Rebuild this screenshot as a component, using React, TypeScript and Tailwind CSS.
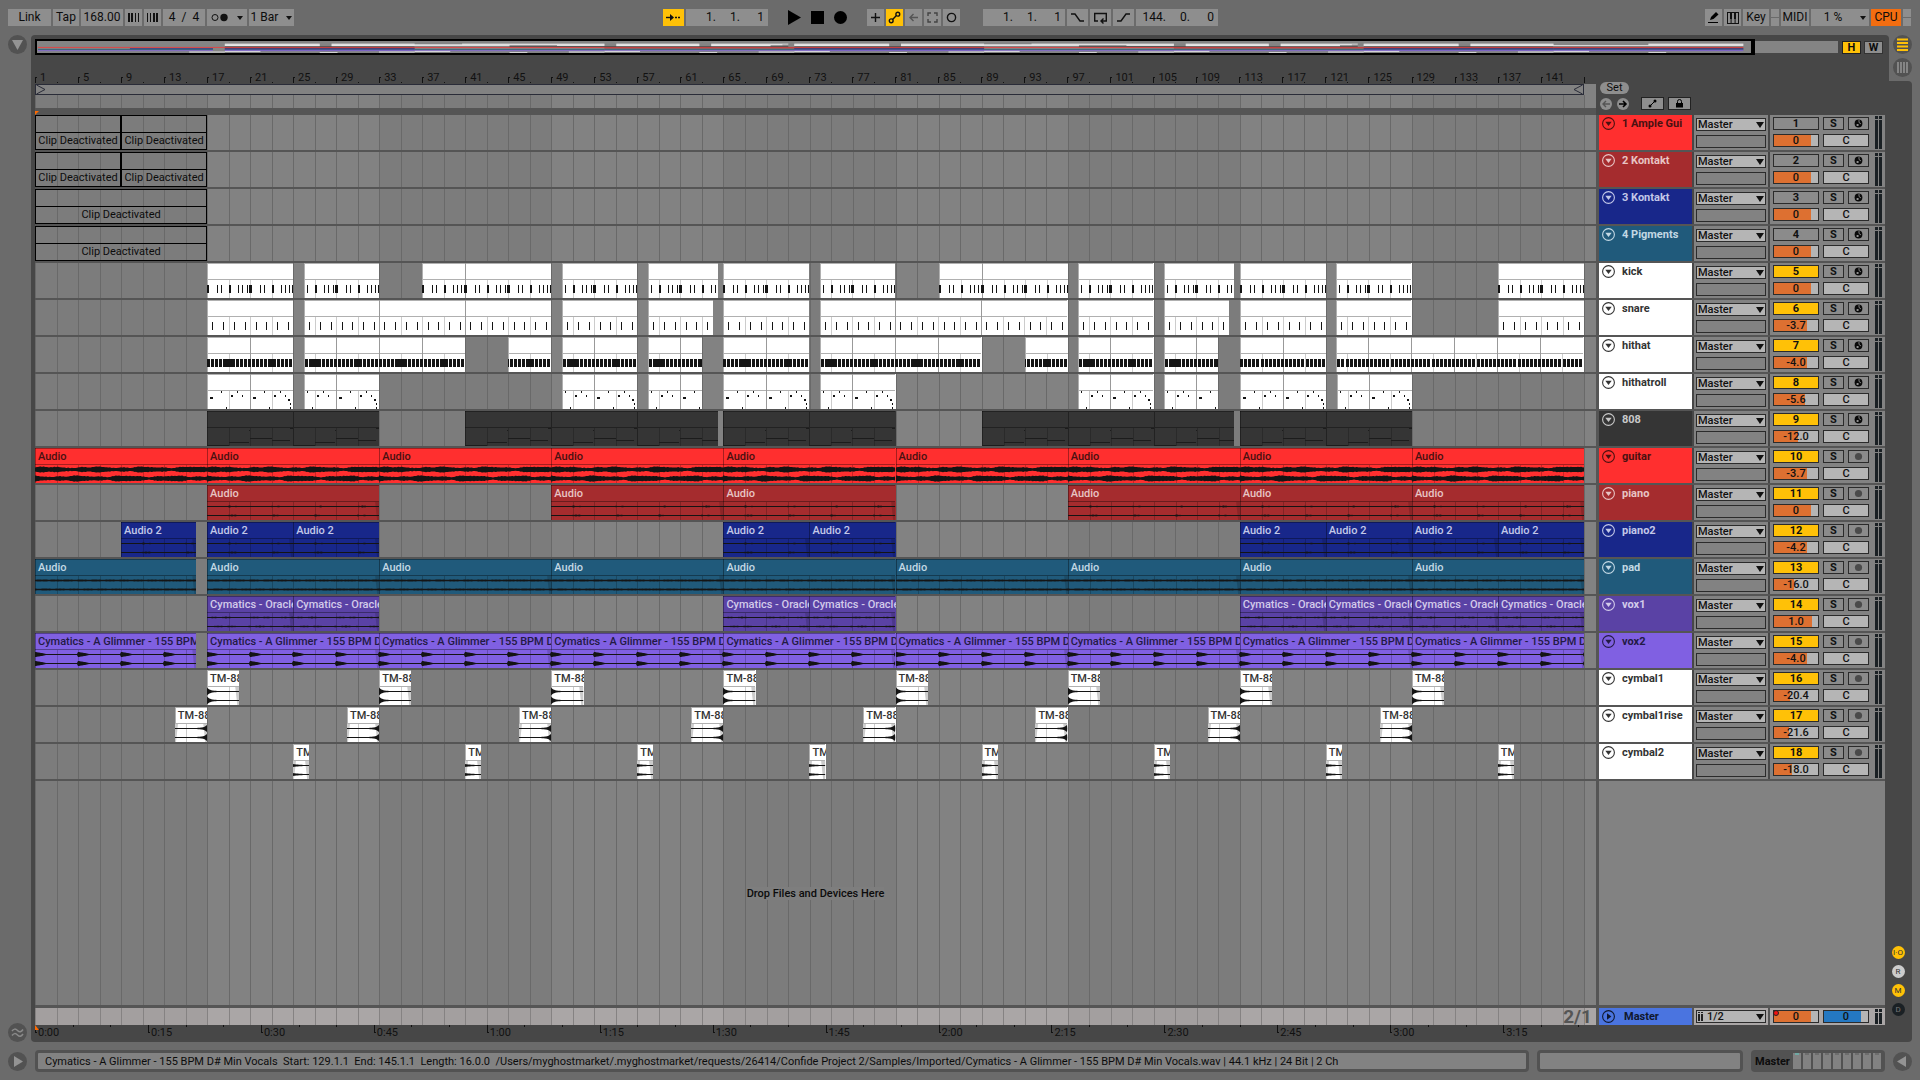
import { useState } from "react";
import type { ReactNode } from "react";

type Kind = "off" | "kick" | "snare" | "hat" | "roll" | "bass" | "guitar" | "piano" | "pad" | "vox" | "pulse" | "hit" | "rise" | "blip";

type Track = {
  name: string;
  color: string;
  text: string;
  kind: Kind;
  title?: string;
  clips: number[][];
  dividers?: number[];
  volume: string;
  fill: number;
};

// bars shown across the timeline
const TOTAL = 145.11;
const BAR = 10.757;

const every16 = [[1, 17], [17, 33], [33, 49], [49, 65], [65, 81], [81, 97], [97, 113], [113, 129], [129, 145]];
const longRun = [[1, 16], ...every16.slice(1)];
const rollClips = [[17, 25], [26, 33], [50, 57], [58, 63], [65, 73], [74, 81], [98, 105], [106, 111], [113, 121], [122, 129]];

const tracks: Track[] = [
  { name: "1 Ample Gui", color: "#ff2f2f", text: "#4a1111", kind: "off", clips: [[1, 9], [9, 17]], volume: "0", fill: 83 },
  { name: "2 Kontakt", color: "#a52c2e", text: "#e8c4c4", kind: "off", clips: [[1, 9], [9, 17]], volume: "0", fill: 83 },
  { name: "3 Kontakt", color: "#18278a", text: "#c3c8e8", kind: "off", clips: [[1, 17]], volume: "0", fill: 83 },
  { name: "4 Pigments", color: "#205a7b", text: "#c3d8e4", kind: "off", clips: [[1, 17]], volume: "0", fill: 83 },
  {
    name: "kick", color: "#ffffff", text: "#333333", kind: "kick", dividers: [41, 89], volume: "0", fill: 83,
    clips: [[17, 25], [26, 33], [37, 49], [50, 57], [58, 64.5], [65, 73], [74, 81], [85, 97], [98, 105], [106, 112.5], [113, 121], [122, 129], [137, 145]],
  },
  {
    name: "snare", color: "#ffffff", text: "#333333", kind: "snare", dividers: [33, 41, 81, 89], volume: "-3.7", fill: 75,
    clips: [[17, 25], [26, 49], [50, 57], [58, 64], [65, 73], [74, 97], [98, 105], [106, 112], [113, 121], [122, 129], [137, 145]],
  },
  {
    name: "hithat", color: "#ffffff", text: "#333333", kind: "hat", volume: "-4.0", fill: 74,
    dividers: [21, 29, 33, 37, 53, 61, 69, 77, 81, 85, 101, 109, 117, 125, 129, 133, 137, 141],
    clips: [[17, 25], [26, 41], [45, 49], [50, 57], [58, 63], [65, 73], [74, 89], [93, 97], [98, 105], [106, 111], [113, 121], [122, 145]],
  },
  {
    name: "hithatroll", color: "#ffffff", text: "#333333", kind: "roll", volume: "-5.6", fill: 70,
    dividers: [21, 29, 53, 61, 69, 77, 101, 109, 117, 125], clips: rollClips,
  },
  {
    name: "808", color: "#353535", text: "#c9c9c9", kind: "bass", dividers: [25, 49, 57, 73, 97, 105, 121], volume: "-12.0", fill: 54,
    clips: [[17, 33], [41, 64.5], [65, 81], [89, 112.5], [113, 129]],
  },
  { name: "guitar", color: "#ff2f2f", text: "#4a1111", kind: "guitar", title: "Audio", clips: every16, volume: "-3.7", fill: 75 },
  { name: "piano", color: "#a52c2e", text: "#e8c4c4", kind: "piano", title: "Audio", clips: [[17, 33], [49, 65], [65, 81], [97, 113], [113, 129], [129, 145]], volume: "0", fill: 83 },
  { name: "piano2", color: "#18278a", text: "#c3c8e8", kind: "piano", title: "Audio 2", clips: [[9, 16], [17, 25], [25, 33], [65, 73], [73, 81], [113, 121], [121, 129], [129, 137], [137, 145]], volume: "-4.2", fill: 75 },
  { name: "pad", color: "#205a7b", text: "#c3d8e4", kind: "pad", title: "Audio", clips: longRun, volume: "-16.0", fill: 45 },
  { name: "vox1", color: "#5a42a5", text: "#d3cbea", kind: "vox", title: "Cymatics - Oracle", clips: [[17, 25], [25, 33], [65, 73], [73, 81], [113, 121], [121, 129], [129, 137], [137, 145]], volume: "1.0", fill: 86 },
  { name: "vox2", color: "#8060e2", text: "#231a44", kind: "pulse", title: "Cymatics - A Glimmer - 155 BPM D#", clips: longRun, volume: "-4.0", fill: 74 },
  { name: "cymbal1", color: "#ffffff", text: "#333333", kind: "hit", title: "TM-88", clips: [17, 33, 49, 65, 81, 97, 113, 129].map((b) => [b, b + 3]), volume: "-20.4", fill: 36 },
  { name: "cymbal1rise", color: "#ffffff", text: "#333333", kind: "rise", title: "TM-88", clips: [17, 33, 49, 65, 81, 97, 113, 129].map((b) => [b - 3, b]), volume: "-21.6", fill: 34 },
  { name: "cymbal2", color: "#ffffff", text: "#333333", kind: "blip", title: "TM", clips: [25, 41, 57, 73, 89, 105, 121, 137].map((b) => [b, b + 1.5]), volume: "-18.0", fill: 41 },
];

// note tables: [x, y, width, height] in pixels over an eight bar loop
const LOOP: Record<string, number[][]> = {
  kick: [[0, 2], [10, 1], [14, 1], [22, 2], [31, 1], [35, 1], [40, 1], [42, 3], [53, 1], [57, 1], [65, 2], [74, 1], [78, 1], [82, 1], [85, 1]].map(([x, w]) => [x, 22, w, 8]),
  snare: [5, 16, 27, 38, 49, 59, 70, 81].map((x) => [x, 22, 1, 8]),
  hat: Array.from({ length: 21 }, (_, i) => [Math.round(i * 4.1), 22, 3, 8]),
  roll: [
    [3, 23, 3, 2], [14, 17, 1, 2], [19, 33, 1, 2], [24, 21, 2, 2], [30, 17, 1, 2], [35, 21, 1, 2],
    [46, 23, 3, 2], [57, 17, 1, 2], [62, 33, 1, 2], [67, 21, 2, 2], [73, 17, 1, 2], [78, 21, 1, 2], [81, 25, 2, 2], [83, 29, 1, 2], [83, 33, 1, 2],
  ],
  bass: [[0, 34, 22, 1], [22, 31, 20, 1], [42, 19, 1, 1], [43, 27, 22, 1], [65, 29, 18, 1], [83, 17, 3, 1]],
};

const HAT_ROLLS = [[18, 22, 7, 8], [61, 22, 7, 8]];

function notePath(kind: Kind, start: number, end: number) {
  let d = "";
  const width = (end - start) * BAR;
  const notes = kind === "hat" && start < 113 ? [...LOOP.hat, ...HAT_ROLLS] : LOOP[kind];
  for (let base = 1; base < end; base += 8) {
    if (base + 8 <= start) continue;
    const off = Math.round((base - start) * BAR);
    for (const [x, y, w, h] of notes) {
      const left = Math.max(0, off + x);
      const right = Math.min(width, off + x + w);
      if (right > left) d += `M${left} ${y}H${right}V${y + h}H${left}Z`;
    }
  }
  return d;
}

function amplitude(kind: Kind, x: number, width: number, ch: number) {
  const wobble = Math.abs(Math.sin(x * 0.9 + ch) * Math.sin(x * 0.23 + ch * 2));
  switch (kind) {
    case "guitar":
      return 1.9 + wobble * 0.7 + Math.sin(x * 0.13 + ch * 2.4) * 0.5 + Math.sin(x * 0.31 + ch) * 0.3;
    case "piano":
      return 0.5 + (x % 43 > 21 && x % 43 < 30 ? wobble * 0.5 : 0);
    case "pad":
      return 0.8 + wobble * 0.2;
    case "vox":
      return 0.5 + Math.abs(Math.sin(x * 0.09)) * 0.4 * wobble;
    case "pulse": {
      const p = x % 43;
      return 0.5 + (p < 2 ? 2 : Math.max(0, 2.2 - p * 0.19));
    }
    case "hit":
      return 0.5 + 3.4 * Math.exp(-x / 3);
    case "rise":
      return 0.5 + 3.4 * Math.exp(-(width - x) / 3);
    case "blip":
      return 0.5 + 1 * Math.exp(-x / 5);
    default:
      return 0.5;
  }
}

function wavePath(kind: Kind, width: number) {
  let d = "";
  [21.5, 30.5].forEach((mid, ch) => {
    const top: string[] = [];
    const bottom: string[] = [];
    for (let x = 0; x <= width; x += 1) {
      const a = amplitude(kind, x, width, ch);
      top.push(`${x} ${(mid - a).toFixed(1)}`);
      bottom.unshift(`${x} ${(mid + a).toFixed(1)}`);
    }
    d += `M${top.join("L")}L${width} ${mid - 0.5}V${mid + 0.5}L${bottom.join("L")}Z`;
  });
  return d;
}

function Clip({ track, start, end }: { track: Track; start: number; end: number }) {
  const width = (end - start) * BAR;
  const style = { width: `${((end - start) / TOTAL) * 100}%` };

  if (track.kind === "off") {
    return (
      <div className="flex shrink-0 flex-col border border-black" style={style}>
        <div className="h-4" />
        <div className="flex h-[18px] items-center justify-center overflow-hidden border-t border-black whitespace-nowrap">
          Clip Deactivated
        </div>
      </div>
    );
  }

  const white = track.color === "#ffffff";
  const midi = !track.title;
  const edge = white ? "#b0b0b0" : "rgba(0,0,0,0.35)";
  const fade = white ? "#cccccc" : "rgba(0,0,0,0.15)";
  const gridLines: number[] = [];
  for (let b = 3; b < end; b += 2) if (b > start) gridLines.push(b);

  return (
    <div className="grid shrink-0 grid-cols-[minmax(0,1fr)] overflow-hidden" style={{ ...style, backgroundColor: track.color }}>
      <svg className="col-start-1 row-start-1 block h-[35px] w-full" viewBox={`0 0 ${width} 35`} preserveAspectRatio="none">
        <g shapeRendering="crispEdges">
          {gridLines.map((b) => (
            <rect key={b} x={(b - start) * BAR} y={17} width={1} height={18} fill={white ? "#cccccc" : "rgba(0,0,0,0.2)"} />
          ))}
          <rect x={0} y={0} width={width} height={1} fill={edge} />
          <rect x={0} y={16} width={width} height={1} fill={edge} />
          <rect x={0} y={0} width={1} height={35} fill={edge} />
          {track.dividers?.filter((b) => b > start && b < end).map((b) => (
            <rect key={b} x={(b - start) * BAR} y={0} width={1} height={35} fill={white ? "#999999" : "#222222"} />
          ))}
        </g>
        {!midi && track.kind !== "guitar" && (
          <path d={`M${width} 17V35H${width - 2}L${width - 4} 17Z${track.kind === "rise" || track.kind === "blip" ? "M0 17V35H1L3 17Z" : ""}`} fill={fade} />
        )}
        {midi ? (
          <path d={notePath(track.kind, start, end)} fill={track.kind === "bass" ? "#1c1c1c" : "#141414"} shapeRendering="crispEdges" />
        ) : (
          <path d={wavePath(track.kind, width)} fill="#141414" />
        )}
      </svg>
      {track.title && (
        <span className="col-start-1 row-start-1 h-4 overflow-hidden pl-[3px] leading-[17px] font-medium whitespace-nowrap" style={{ color: track.text }}>
          {track.title}
        </span>
      )}
    </div>
  );
}

function Lane({ track }: { track: Track }) {
  const cells: ReactNode[] = [];
  let cursor = 1;
  track.clips.forEach(([start, end]) => {
    if (start > cursor) {
      cells.push(<div key={`gap${start}`} className="shrink-0" style={{ width: `${((start - cursor) / TOTAL) * 100}%` }} />);
    }
    cells.push(<Clip key={start} track={track} start={start} end={end} />);
    cursor = end;
  });
  return <div className="flex h-[37px] overflow-hidden border-b-2 border-[#555555]">{cells}</div>;
}

// alternating 16 bar shading with a line on every second bar
function BarGrid({ light = false }: { light?: boolean }) {
  return (
    <svg className="absolute inset-0 h-full w-full" viewBox={`0 0 ${TOTAL * BAR} 1`} preserveAspectRatio="none" shapeRendering="crispEdges">
      <rect width={TOTAL * BAR} height={1} fill={light ? "#aaa6a6" : "#828282"} />
      {Array.from({ length: 5 }, (_, i) => (
        <rect key={i} x={i * 32 * BAR} width={16 * BAR} height={1} fill={light ? "#a39f9f" : "#7c7c7c"} />
      ))}
      {Array.from({ length: 73 }, (_, i) => (
        <rect key={i} x={i * 2 * BAR} width={1} height={1} fill={light ? "#858282" : "#696969"} />
      ))}
    </svg>
  );
}

function Overview() {
  return (
    <div className="flex h-4 items-center">
      <div className="flex h-4 flex-1 items-center bg-[linear-gradient(#848484,#848484)] bg-[length:100%_12px] bg-center bg-no-repeat">
        <div className="h-4 w-[95.4%] border-2 border-black pl-px">
          <svg className="block h-3 w-full border-r-2 border-black" viewBox="0 0 1713 12" preserveAspectRatio="none">
            {tracks.map((t, i) =>
              t.kind === "off" ? null : t.clips.map(([s, e]) => (
                <rect key={`${i}-${s}`} x={(s - 1) * 11.863 - 3} y={i * 0.66} width={(e - s) * 11.863} height={0.9} fill={t.color} opacity={0.8} />
              ))
            )}
          </svg>
        </div>
      </div>
      <button className="ml-1 h-[13px] w-[19px] border border-[#222222] bg-[#ffc107] leading-[11px] font-bold">H</button>
      <button className="mr-0.5 ml-[3px] h-[13px] w-[19px] border border-[#333333] bg-[#8e8e8e] leading-[11px] font-bold">W</button>
    </div>
  );
}

function Ruler() {
  return (
    <div className="flex h-[29px] items-end overflow-hidden">
      {Array.from({ length: 36 }, (_, i) => (
        <div key={i} className="flex h-[13px] shrink-0" style={{ width: `${(4 / TOTAL) * 100}%` }}>
          <div className="flex w-1/2 items-end">
            <svg className="h-[7px] w-[5px] shrink-0" viewBox="0 0 5 7" shapeRendering="crispEdges">
              <path d="M0 0h2v1H1v5H0z" fill="#111" />
            </svg>
            <span className="leading-[13px] whitespace-nowrap text-[#111]">{i * 4 + 1}</span>
          </div>
          <div className="mt-auto mb-px h-px w-px bg-[#111]" />
        </div>
      ))}
      <div className="mb-px h-[6px] w-px bg-[#111]" />
    </div>
  );
}

function TimeRuler() {
  return (
    <div className="flex h-[17px] overflow-hidden">
      {Array.from({ length: 14 }, (_, i) => (
        <div key={i} className="flex shrink-0" style={{ width: `${(10.5 / TOTAL) * 100}%` }}>
          <div className="flex w-1/3">
            {i === 0 ? (
              <svg className="h-2 w-[3px] shrink-0 overflow-visible" viewBox="0 0 3 8"><path d="M0 0L4 5H0Z" fill="#ff6a00" /><path d="M0 5h1v2h1v1H0z" fill="#111" /></svg>
            ) : (
              <svg className="h-2 w-[3px] shrink-0" viewBox="0 0 3 8" shapeRendering="crispEdges"><path d="M0 0h1v7h1v1H0z" fill="#111" /></svg>
            )}
            <span className="leading-[16px] whitespace-nowrap text-[#111]">
              {Math.floor((i * 15) / 60)}:{String((i * 15) % 60).padStart(2, "0")}
            </span>
          </div>
          <div className="h-0.5 w-1/3 border-l border-[#111]" />
          <div className="h-0.5 w-1/3 border-l border-[#111]" />
        </div>
      ))}
    </div>
  );
}

function FoldIcon({ color, play = false }: { color: string; play?: boolean }) {
  return (
    <svg className="size-[13px] shrink-0" viewBox="0 0 13 13">
      <circle cx="6.5" cy="6.5" r="5.9" fill="none" stroke={color} strokeWidth="1.1" />
      <path d={play ? "M5 3.3L9.4 6.5L5 9.7Z" : "M3.3 4.7H9.7L6.5 9Z"} fill={color} />
    </svg>
  );
}

function RouteSelect({ label, options, icon }: { label: string; options: string[]; icon?: boolean }) {
  return (
    <div className="relative">
      <select
        aria-label={label}
        className={`block h-[13px] w-full appearance-none border border-[#2b2b2b] bg-[#b5b5b5] py-0 pr-3 leading-[11px] font-medium text-[#111] ${icon ? "pl-2.5" : "pl-px"}`}
      >
        {options.map((o) => (
          <option key={o}>{o}</option>
        ))}
      </select>
      <svg className="pointer-events-none absolute top-1 right-[2px] h-[6px] w-2" viewBox="0 0 8 6"><path d="M0 0H8L4 6Z" fill="#111" /></svg>
      {icon && (
        <svg className="pointer-events-none absolute top-0.5 left-0.5 h-[9px] w-[5px]" viewBox="0 0 5 9" shapeRendering="crispEdges">
          <path d="M0 0h2v1H0zM3 0h2v1H3zM0 2h2v7H0zM3 2h2v7H3z" fill="#222" />
        </svg>
      )}
    </div>
  );
}

function ValueBox({ label, value, fill, blue }: { label: string; value: string; fill: number; blue?: boolean }) {
  const tint = blue ? "#2478c2" : "#dd7031";
  return (
    <input
      aria-label={label}
      defaultValue={value}
      className="block h-[13px] w-[46px] border border-[#2b2b2b] bg-[#b5b5b5] p-0 text-center leading-[11px] font-medium text-[#111]"
      style={{ backgroundImage: `linear-gradient(to right, ${tint} ${fill}%, #b5b5b5 ${fill}%)` }}
    />
  );
}

function Meter() {
  return (
    <div className="flex gap-px self-stretch">
      {[0, 1].map((i) => (
        <div key={i} className="flex w-[3px] flex-col gap-px">
          <div className="h-[3px] bg-[#1a2024]" />
          <div className="flex-1 bg-[#1a2024]" />
        </div>
      ))}
    </div>
  );
}

function TrackHeader({ track, index }: { track: Track; index: number }) {
  const [active, setActive] = useState(index > 3);
  return (
    <div className="flex h-[37px] gap-0.5 border-b-2 border-[#555555]">
      <div className="flex w-[93px] gap-[7px] pt-0.5 pl-[3px]" style={{ backgroundColor: track.color, color: track.text }}>
        <FoldIcon color={track.text} />
        <span className="leading-[13px] font-bold whitespace-nowrap">{track.name}</span>
      </div>
      <div className="w-[74px] space-y-1 bg-[#828282] px-0.5 pt-[3px]">
        <RouteSelect label={`${track.name} output`} options={["Master", "Sends Only"]} />
        <div className="h-[13px] border border-[#2b2b2b]" />
      </div>
      <div className="flex w-[115px] gap-1.5 bg-[#828282] py-px pl-[3px]">
        <div className="mt-px grid grid-cols-[46px_21px_21px] grid-rows-[13px_13px] gap-x-1 gap-y-1">
          <button
            onClick={() => setActive(!active)}
            className={`border border-[#2b2b2b] leading-[11px] font-bold text-[#111] ${active ? "bg-[#ffc107]" : "bg-[#8b8b8b]"}`}
          >
            {index + 1}
          </button>
          <button className="border border-[#2b2b2b] bg-[#8b8b8b] leading-[11px] font-bold text-[#111]">S</button>
          <button aria-label={`Arm ${track.name}`} className="flex items-center justify-center border border-[#2b2b2b] bg-[#8b8b8b]">
            <svg className="size-[9px]" viewBox="0 0 9 9">
              {index < 9 ? (
                <>
                  <circle cx="4.5" cy="4.5" r="3.9" fill="#0a0a0a" />
                  <path d="M5 1V3.500L7 5" fill="none" stroke="#9a9a9a" strokeWidth="0.8" />
                  <ellipse cx="3.6" cy="6" rx="1.2" ry="1" fill="#9a9a9a" />
                </>
              ) : (
                <circle cx="4.5" cy="4.5" r="3.6" fill="#4a4a4a" />
              )}
            </svg>
          </button>
          <ValueBox label={`${track.name} volume`} value={track.volume} fill={track.fill} />
          <button className="col-span-2 border border-[#2b2b2b] bg-[#b5b5b5] leading-[11px] font-medium text-[#111]">C</button>
        </div>
        <Meter />
      </div>
    </div>
  );
}

function Tool({ children, className, label }: { children?: ReactNode; className: string; label?: string }) {
  return (
    <button aria-label={label} className={`flex h-[17px] shrink-0 items-center justify-center whitespace-pre ${className}`}>
      {children}
    </button>
  );
}

function Stroke({ d, w = 13, color = "#111", children }: { d?: string; w?: number; color?: string; children?: ReactNode }) {
  return (
    <svg className="block" width={w} height={13} viewBox={`0 0 ${w} 13`} fill="none" stroke={color} strokeWidth={1.4}>
      {d && <path d={d} />}
      {children}
    </svg>
  );
}

function Position({ parts }: { parts: string[] }) {
  return (
    <div className="flex h-[17px] w-[82px] shrink-0 items-center justify-end bg-[#8e8e8e] pr-1">
      {parts.map((p, i) => (
        <span key={i} className={i === 0 ? "" : "w-6 text-right"}>{p}</span>
      ))}
    </div>
  );
}

const G = "bg-[#8e8e8e]";

function Transport() {
  return (
    <header className="flex h-[35px] shrink-0 items-start px-2 pt-[9px] text-[12px]">
      <div className="flex gap-0.5">
        <Tool className={`${G} w-[43px]`}>Link</Tool>
        <Tool className={`${G} w-[26px]`}>Tap</Tool>
        <input aria-label="Tempo" defaultValue="168.00" className="h-[17px] w-[42px] bg-[#8e8e8e] text-center leading-[17px]" />
        <Tool label="Nudge down" className={`${G} w-[17px]`}>
          <svg width="12" height="9" shapeRendering="crispEdges"><path d="M0 0h2v9H0zM3 0h2v9H3zM7 0h1v9H7zM10 0h1v9h-1z" fill="#111" /></svg>
        </Tool>
        <Tool label="Nudge up" className={`${G} w-[17px]`}>
          <svg width="12" height="9" shapeRendering="crispEdges"><path d="M0 0h1v9H0zM3 0h1v9H3zM6 0h2v9H6zM9 0h2v9H9z" fill="#111" /></svg>
        </Tool>
        <Tool className={`${G} w-[42px]`}>4  /  4</Tool>
        <Tool label="Metronome" className={`${G} w-10 gap-2`}>
          <svg width="18" height="9"><circle cx="4" cy="4.5" r="3" fill="none" stroke="#111" /><circle cx="13" cy="4.5" r="3.7" fill="#111" /></svg>
          <svg width="6" height="4"><path d="M0 0H6L3 4Z" fill="#111" /></svg>
        </Tool>
        <Tool className={`${G} w-[45px] gap-2`}>
          1 Bar
          <svg width="6" height="4"><path d="M0 0H6L3 4Z" fill="#111" /></svg>
        </Tool>
      </div>
      <div className="flex-[369]" />
      <div className="flex gap-0.5">
        <Tool label="Follow" className="w-[21px] bg-[#ffc107]">
          <Stroke w={15} color="#111"><path d="M0 6.5H6" /><path d="M4 3L8 6.5L4 10Z" fill="#111" stroke="none" /><path d="M9 6.5H15" strokeDasharray="2 1" /></Stroke>
        </Tool>
        <Position parts={["1.", "1.", "1"]} />
        <div className="ml-[18px] flex h-[17px] items-center gap-2.5 pr-[18px]">
          <button aria-label="Play"><svg className="block" width="13" height="15"><path d="M0 0L13 7.5L0 15Z" /></svg></button>
          <button aria-label="Stop" className="size-[13px] bg-black" />
          <button aria-label="Record" className="size-[13px] rounded-full bg-black" />
        </div>
        <Tool label="Overdub" className={`${G} w-[17px]`}><Stroke d="M6.5 2V11M2 6.5H11" /></Tool>
        <Tool label="Automation arm" className="w-[17px] bg-[#ffc107]">
          <Stroke d="M4.6 8.4L8.4 4.6"><circle cx="3.2" cy="9.8" r="1.9" /><circle cx="9.8" cy="3.2" r="1.9" /></Stroke>
        </Tool>
        <Tool label="Re-enable automation" className={`${G} w-[17px]`}><Stroke d="M11 6.5H3M6.5 3L3 6.5L6.5 10" color="#555" /></Tool>
        <Tool label="Capture" className={`${G} w-[17px]`}><Stroke d="M2 5V2H5M8 2H11V5M11 8V11H8M5 11H2V8" color="#444" /></Tool>
        <Tool label="Session record" className={`${G} w-[17px]`}><Stroke><circle cx="6.5" cy="6.5" r="4.1" /></Stroke></Tool>
        <div className="w-[19px]" />
        <Position parts={["1.", "1.", "1"]} />
        <Tool label="Punch in" className={`${G} w-[21px]`}><Stroke w={15} d="M1 3H5L10 10H14" /></Tool>
        <Tool label="Loop" className={`${G} w-[21px]`}><Stroke w={15} d="M5 10H1.7V2.5H13.3V10H8M10.5 7.5L8 10L10.5 12.5" /></Tool>
        <Tool label="Punch out" className={`${G} w-[21px]`}><Stroke w={15} d="M1 10H5L10 3H14" /></Tool>
        <Position parts={["144.", "0.", "0"]} />
      </div>
      <div className="flex-[487]" />
      <div className="flex gap-0.5">
        <Tool label="Draw mode" className={`${G} w-[17px]`}>
          <svg width="13" height="13"><path d="M3 9L4 6L9 1L11.5 3.5L6.5 8Z" /><path d="M1 11H11V12H1Z" /></svg>
        </Tool>
        <Tool label="Computer keyboard" className={`${G} w-[17px]`}>
          <svg width="12" height="12"><rect x="0.5" y="0.5" width="11" height="11" fill="none" stroke="#111" /><path d="M3 0h2v7H3zM7 0h2v7H7zM3.6 7h1v5h-1zM7.6 7h1v5h-1z" fill="#111" /></svg>
        </Tool>
        <Tool className={`${G} w-[26px]`}>Key</Tool>
        <div className="flex w-2 flex-col gap-px"><div className="h-2 bg-[#8e8e8e]" /><div className="h-2 bg-[#8e8e8e]" /></div>
        <Tool className={`${G} w-[28px]`}>MIDI</Tool>
        <Tool className={`${G} w-[58px] gap-[18px] pl-2.5`}>
          1 %
          <svg width="6" height="4"><path d="M0 0H6L3 4Z" fill="#111" /></svg>
        </Tool>
        <Tool className="w-[30px] bg-[#f36d10]">CPU</Tool>
        <div className="mr-px flex w-2 flex-col gap-px"><div className="h-2 bg-[#8e8e8e]" /><div className="h-2 bg-[#8e8e8e]" /></div>
      </div>
    </header>
  );
}

function RoundButton({ label, children }: { label: string; children: ReactNode }) {
  return (
    <button aria-label={label} className="block size-[19px] shrink-0 rounded-full bg-[#525252]">
      <svg viewBox="0 0 19 19" className="block size-[19px]">{children}</svg>
    </button>
  );
}

function TimelineColumn() {
  return (
    <div className="flex min-w-0 flex-1 flex-col">
      <Ruler />
      <div className="flex h-[11px] bg-[#828282]">
        <div className="flex items-center justify-between border border-[#2a2c38]" style={{ width: `${(144 / TOTAL) * 100}%` }}>
          <svg width="10" height="9"><path d="M0.5 0L9 4.5L0.5 9" fill="none" stroke="#2a2c38" /></svg>
          <svg width="10" height="9"><path d="M9.5 0L1 4.5L9.5 9" fill="none" stroke="#2a2c38" /></svg>
        </div>
      </div>
      <div className="relative h-[13px]"><BarGrid /></div>
      <div className="flex h-[7px] items-end bg-[#555555]">
        <svg width="4" height="4"><path d="M0 0H4L0 4Z" fill="#ff6a00" /></svg>
      </div>
      <div className="relative flex flex-1 flex-col border-b-[3px] border-[#555555]">
        <BarGrid />
        <div className="relative">
          {tracks.map((t) => <Lane key={t.name} track={t} />)}
        </div>
        <div className="relative flex flex-1 items-center justify-center">
          <span className="bg-[#7e7e7e] font-medium">Drop Files and Devices Here</span>
        </div>
      </div>
      <div className="relative h-[17px]">
        <BarGrid light />
        <span className="relative block pr-1 text-right text-[19px] leading-[17px] font-bold text-[#555555]">2/1</span>
      </div>
      <TimeRuler />
    </div>
  );
}

function HeaderColumn() {
  return (
    <div className="flex w-[289px] shrink-0 flex-col">
      <div className="flex h-[60px] flex-col pt-[27px] pl-1">
        <button className="h-3 w-[29px] rounded-full bg-[#8e8e8e] leading-3">Set</button>
        <div className="mt-[3px] flex items-center">
          <button aria-label="Previous locator" className="size-3 rounded-full bg-[#8e8e8e]">
            <svg className="block" viewBox="0 0 12 12"><path d="M10 6H3M6 3L3 6L6 9" fill="none" stroke="#555" strokeWidth="1.4" /></svg>
          </button>
          <button aria-label="Next locator" className="ml-[5px] size-3 rounded-full bg-[#8e8e8e]">
            <svg className="block" viewBox="0 0 12 12"><path d="M2 6H9M6 3L9 6L6 9" fill="none" stroke="#000" strokeWidth="1.6" /></svg>
          </button>
          <button aria-label="Automation mode" className="ml-3 flex h-[13px] w-[23px] items-center justify-center border border-[#222] bg-[#8e8e8e]">
            <svg width="9" height="9"><path d="M2 7L7 2" stroke="#000" /><circle cx="2" cy="7" r="1.5" /><circle cx="7" cy="2" r="1.5" /></svg>
          </button>
          <button aria-label="Lock envelopes" className="ml-1 flex h-[13px] w-[23px] items-center justify-center border border-[#222] bg-[#8e8e8e]">
            <svg width="9" height="9"><path d="M1 4H8V8.500H1Z" /><path d="M2.500 4V2.500A2 2 0 0 1 6.500 2.500V4" fill="none" stroke="#000" /></svg>
          </button>
        </div>
      </div>
      <div className="flex flex-1 flex-col border-l-[3px] border-[#555555]">
        {tracks.map((t, i) => <TrackHeader key={t.name} track={t} index={i} />)}
        <div className="flex-1 bg-[#828282]" />
        <div className="flex h-5 gap-0.5 border-t-[3px] border-[#555555] bg-[#555555]">
          <div className="flex w-[93px] items-center gap-[9px] bg-[#4a74e0] pl-[3px] font-bold text-[#10182e]">
            <FoldIcon color="#10182e" play />
            Master
          </div>
          <div className="w-[74px] bg-[#aaa6a6] px-0.5 pt-0.5">
            <RouteSelect label="Master output" options={["1/2", "3/4"]} icon />
          </div>
          <div className="flex w-[115px] gap-1 bg-[#aaa6a6] py-px pl-[3px]">
            <div className="relative mt-px">
              <ValueBox label="Master volume" value="0" fill={83} />
              <span className="absolute top-0 left-0 size-[6px] rounded-full border border-[#222] bg-[#f01010]" />
            </div>
            <div className="mt-px mr-0.5"><ValueBox label="Cue volume" value="0" fill={83} blue /></div>
            <Meter />
          </div>
        </div>
      </div>
      <div className="h-[17px]" />
    </div>
  );
}

export default function App() {
  return (
    <div className="flex min-h-screen flex-col bg-[#6b6b6b] font-[Roboto,sans-serif] text-[11px] leading-[13px] text-[#0c0c0c]">
      <Transport />
      <div className="flex flex-1">
        <div className="flex w-[31px] shrink-0 flex-col items-start justify-between pl-2">
          <RoundButton label="Show browser"><path d="M4 5H15L9.5 15Z" fill="#939393" /></RoundButton>
          <RoundButton label="Show groove pool">
            <path d="M4 8Q6.500 4.500 9.500 7.500T15 6.500M4 12.500Q6.500 9 9.500 12T15 11" fill="none" stroke="#8a8a8a" strokeWidth="1.500" />
          </RoundButton>
        </div>
        <main className="flex min-w-0 flex-1 flex-col rounded-l-sm rounded-tr-sm bg-[#474747] px-1 pt-1">
          <Overview />
          <div className="flex flex-1">
            <TimelineColumn />
            <HeaderColumn />
          </div>
        </main>
        <aside className="flex w-[31px] shrink-0 flex-col">
          <div className="flex h-[46px] flex-col gap-1 pl-1">
            <RoundButton label="Arrangement view"><path d="M4 4.500H15M4 8H15M4 11.500H15M4 15H15" stroke="#ffc107" strokeWidth="1.800" /></RoundButton>
            <RoundButton label="Session view"><path d="M5 4V15M8 4V15M11 4V15M14 4V15" stroke="#8a8a8a" strokeWidth="1.800" /></RoundButton>
          </div>
          <div className="mr-2 flex flex-1 flex-col items-center justify-end gap-1.5 rounded-r-sm bg-[#474747] pr-[5px] pb-[26px] text-[8px] leading-[13px] text-[#333]">
            <button className="size-[13px] rounded-full bg-[#ffc107]">I·O</button>
            <button className="size-[13px] rounded-full bg-[#cccccc]">R</button>
            <button className="size-[13px] rounded-full bg-[#ffc107]">M</button>
            <button className="size-[13px] rounded-full bg-[#1a2024] text-[#777]">D</button>
          </div>
        </aside>
      </div>
      <footer className="flex h-[38px] shrink-0 items-center px-2">
        <RoundButton label="Show detail view"><path d="M6 4V15L15 9.500Z" fill="#939393" /></RoundButton>
        <div className="ml-2 flex h-[22px] min-w-0 flex-1 items-center overflow-hidden rounded-sm border-[3px] border-[#525252] bg-[#828282] pl-[7px] whitespace-pre">
          Cymatics - A Glimmer - 155 BPM D# Min Vocals  Start: 129.1.1  End: 145.1.1  Length: 16.0.0  /Users/myghostmarket/.myghostmarket/requests/26414/Confide Project 2/Samples/Imported/Cymatics - A Glimmer - 155 BPM D# Min Vocals.wav | 44.1 kHz | 24 Bit | 2 Ch
        </div>
        <div className="ml-2 h-[22px] w-[206px] rounded-sm border-[3px] border-[#525252] bg-[#828282]" />
        <div className="ml-2 flex h-[22px] w-[134px] items-center rounded-sm bg-[#525252] pl-1 font-bold">
          <span className="w-[38px]">Master</span>
          <div className="flex gap-0.5">
            {Array.from({ length: 9 }, (_, i) => (
              <div key={i} className="h-4 w-2 bg-[#828282]">
                <div className={`mx-0.5 h-0.5 ${i === 0 ? "bg-[#6fa9a4]" : "bg-[#6d6d6d]"}`} />
              </div>
            ))}
          </div>
        </div>
        <div className="ml-2"><RoundButton label="Show chains"><path d="M13 4V15L4 9.500Z" fill="#939393" /></RoundButton></div>
      </footer>
    </div>
  );
}
